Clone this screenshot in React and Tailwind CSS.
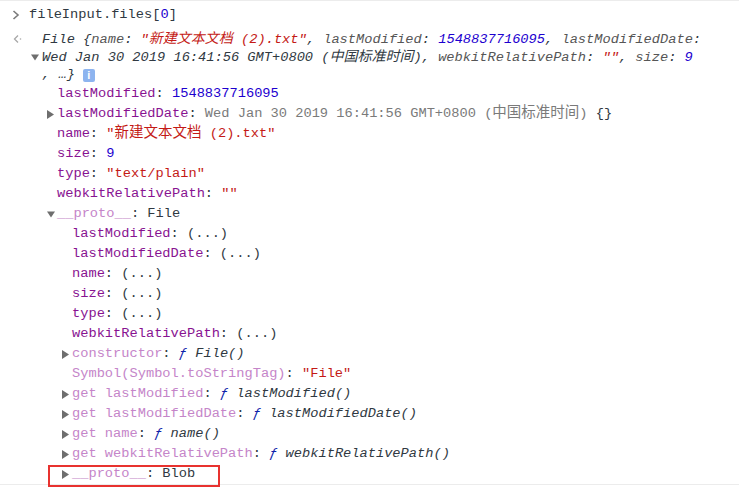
const mono = { fontFamily: '"Liberation Mono", "Noto Sans CJK SC", monospace' };

const K = "text-[#881391]";
const KL = "text-[#c585c9]";
const NUM = "text-[#1c00cf]";
const STR = "text-[#c41a16]";
const TXT = "text-[#303942]";

const Cjk = ({ children, size = "text-[14.5px]" }) => (
  <span className={`${size} leading-none`} style={{ fontFamily: '"Noto Sans CJK SC", sans-serif' }}>
    {children}
  </span>
);

const Tri = ({ open }) =>
  open ? (
    <svg width="8" height="7" viewBox="0 0 8 7" className="shrink-0">
      <path d="M0 0.5h8L4 6.5z" fill="#6e6e6e" />
    </svg>
  ) : (
    <svg width="7" height="9" viewBox="0 0 7 9" className="shrink-0">
      <path d="M0 0v9l7-4.5z" fill="#6e6e6e" />
    </svg>
  );

const Row = ({ level, tri, children }) => (
  <div className={`flex items-center h-5 leading-[20px] whitespace-pre ${level === 1 ? "pl-[47px]" : "pl-[62px]"}`}>
    <span className="w-[10px] flex items-center">{tri && <Tri open={tri === "open"} />}</span>
    <span>{children}</span>
  </div>
);

const Fn = ({ name }) => (
  <>
    <span className="text-[#0d22aa] italic">ƒ </span>
    <span className={`${TXT} italic`}>{name}</span>
  </>
);

export default function App() {
  return (
    <div className="w-[739px] h-[490px] bg-white border-t border-[#ececec] text-[13.7px] overflow-hidden" style={mono}>
      <div className="flex items-center h-[18px] leading-[18px] mt-[5px] whitespace-pre">
        <span className="w-[29px] flex justify-center pl-[2px]">
          <svg width="8" height="10" viewBox="0 0 8 10">
            <path d="M1.5 1l4.5 4-4.5 4" stroke="#7b7b7b" strokeWidth="1.6" fill="none" />
          </svg>
        </span>
        <span className={TXT}>
          fileInput.files[<span className={NUM}>0</span>]
        </span>
      </div>

      <div className="mt-[6px] leading-[18px] whitespace-pre italic">
        <div className="flex items-center h-[18px]">
          <span className="w-[42px] flex justify-center pr-[8px]">
            <svg width="10" height="10" viewBox="0 0 10 10">
              <path d="M6 1.5L2.5 5 6 8.5" stroke="#a8a8a8" strokeWidth="1.3" fill="none" />
              <circle cx="8.5" cy="5" r="0.8" fill="#a8a8a8" />
            </svg>
          </span>
          <span className={TXT}>
            File {"{"}
            <span className="text-[#565656]">name</span>: <span className={STR}>"<Cjk size="text-[14px]">新建文本文档</Cjk> (2).txt"</span>,{" "}
            <span className="text-[#565656]">lastModified</span>: <span className={NUM}>1548837716095</span>,{" "}
            <span className="text-[#565656]">lastModifiedDate</span>:
          </span>
        </div>
        <div className="flex items-center h-[18px]">
          <span className="w-[31px]" />
          <span className="w-[11px] flex items-center">
            <Tri open />
          </span>
          <span className={TXT}>
            Wed Jan 30 2019 16:41:56 GMT+0800 (<Cjk size="text-[14px]">中国标准时间</Cjk>),{" "}
            <span className="text-[#565656]">webkitRelativePath</span>: <span className={STR}>""</span>,{" "}
            <span className="text-[#565656]">size</span>: <span className={NUM}>9</span>
          </span>
        </div>
        <div className="flex items-center h-[18px] pl-[42px]">
          <span className={TXT}>, …{"}"}</span>
          <span className="ml-[8px] w-[12px] h-[13px] rounded-[2px] bg-[#8db4ef] text-white not-italic text-[11px] leading-[13px] text-center font-bold" style={{ fontFamily: '"Liberation Sans", sans-serif' }}>
            i
          </span>
        </div>
      </div>

      <Row level={1}>
        <span className={K}>lastModified</span>
        <span className={TXT}>: </span>
        <span className={NUM}>1548837716095</span>
      </Row>
      <Row level={1} tri="closed">
        <span className={K}>lastModifiedDate</span>
        <span className={TXT}>: </span>
        <span className="text-[#7a7a7a]">
          Wed Jan 30 2019 16:41:56 GMT+0800 (<Cjk>中国标准时间</Cjk>)
        </span>
        <span className={TXT}> {"{}"}</span>
      </Row>
      <Row level={1}>
        <span className={K}>name</span>
        <span className={TXT}>: </span>
        <span className={STR}>
          "<Cjk>新建文本文档</Cjk> (2).txt"
        </span>
      </Row>
      <Row level={1}>
        <span className={K}>size</span>
        <span className={TXT}>: </span>
        <span className={NUM}>9</span>
      </Row>
      <Row level={1}>
        <span className={K}>type</span>
        <span className={TXT}>: </span>
        <span className={STR}>"text/plain"</span>
      </Row>
      <Row level={1}>
        <span className={K}>webkitRelativePath</span>
        <span className={TXT}>: </span>
        <span className={STR}>""</span>
      </Row>
      <Row level={1} tri="open">
        <span className={KL}>__proto__</span>
        <span className={TXT}>: File</span>
      </Row>
      {["lastModified", "lastModifiedDate", "name", "size", "type", "webkitRelativePath"].map((k) => (
        <Row level={2} key={k}>
          <span className={K}>{k}</span>
          <span className={TXT}>: (...)</span>
        </Row>
      ))}
      <Row level={2} tri="closed">
        <span className={KL}>constructor</span>
        <span className={TXT}>: </span>
        <Fn name="File()" />
      </Row>
      <Row level={2}>
        <span className={KL}>Symbol(Symbol.toStringTag)</span>
        <span className={TXT}>: </span>
        <span className={STR}>"File"</span>
      </Row>
      {["lastModified", "lastModifiedDate", "name", "webkitRelativePath"].map((k) => (
        <Row level={2} tri="closed" key={"get" + k}>
          <span className={KL}>get {k}</span>
          <span className={TXT}>: </span>
          <Fn name={k + "()"} />
        </Row>
      ))}
      <div className="relative border-b border-[#ececec]">
        <Row level={2} tri="closed">
          <span className={KL}>__proto__</span>
          <span className={TXT}>: Blob</span>
        </Row>
        <div className="absolute left-[48px] top-[1px] w-[172px] h-[22px] border-2 border-[#e8322f]" />
      </div>
    </div>
  );
}
